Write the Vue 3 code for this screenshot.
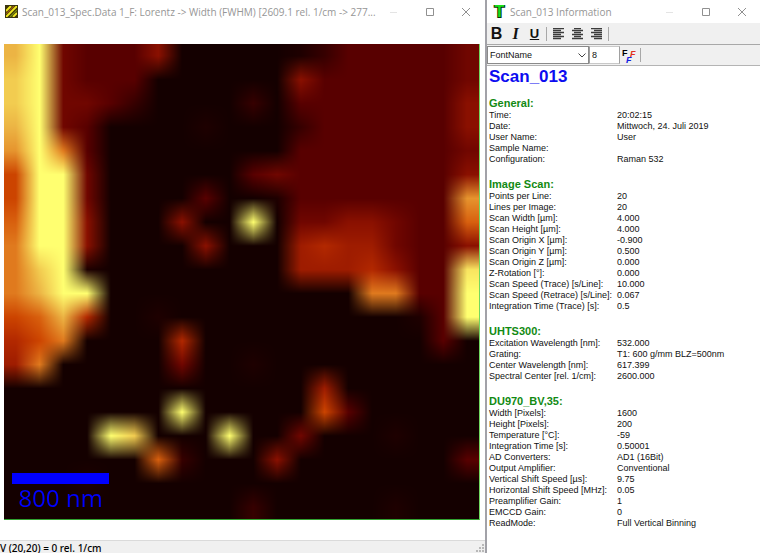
<script setup>
import { onMounted, ref } from 'vue'

// Colour scale, from lowest to highest value (one hex digit per step)
const palette = [
  [20, 0, 0], [30, 0, 0], [54, 0, 0], [88, 0, 0],
  [112, 6, 0], [138, 16, 0], [158, 28, 0], [178, 40, 0],
  [204, 68, 0], [216, 96, 14], [224, 122, 30], [230, 148, 46],
  [236, 180, 68], [242, 204, 80], [248, 228, 96], [255, 255, 112],
]

// 20 x 20 scan points
const scan = [
  'cf433350000012333334',
  'df433300000053333334',
  'df443200002033333335',
  'cf430000100023333335',
  'bfa30000000033333334',
  '8ff40000003433333335',
  '8ff4000030013333333b',
  '9ff5000500f044554339',
  'aff50000500067664335',
  'adf1000000006667533e',
  'acff00000000000aa33f',
  '89c7001000000000013f',
  '78a00007000000000030',
  '6a000004001000000000',
  '00000000000006000000',
  '0000000f000008300000',
  '0000fd000f0040001000',
  '00000092000500000003',
  '00010000000000000000',
  '00000000002000001000',
]

const canvas = ref(null)

function colorAt(col, row) {
  const r = Math.min(19, Math.max(0, row))
  const c = Math.min(19, Math.max(0, col))
  return palette[parseInt(scan[r][c], 16)]
}

onMounted(() => {
  const el = canvas.value
  const ctx = el.getContext('2d')
  const size = el.width
  const img = ctx.createImageData(size, size)
  const cell = size / 20
  for (let y = 0; y < size; y++) {
    const gy = (y + 0.5) / cell - 0.5
    const r0 = Math.floor(gy)
    const fy = gy - r0
    for (let x = 0; x < size; x++) {
      const gx = (x + 0.5) / cell - 0.5
      const c0 = Math.floor(gx)
      const fx = gx - c0
      const a = colorAt(c0, r0)
      const b = colorAt(c0 + 1, r0)
      const c = colorAt(c0, r0 + 1)
      const d = colorAt(c0 + 1, r0 + 1)
      const i = (y * size + x) * 4
      for (let k = 0; k < 3; k++) {
        const top = a[k] + (b[k] - a[k]) * fx
        const bottom = c[k] + (d[k] - c[k]) * fx
        img.data[i + k] = top + (bottom - top) * fy
      }
      img.data[i + 3] = 255
    }
  }
  ctx.putImageData(img, 0, 0)
})

const sections = [
  {
    title: 'General:',
    rows: [
      ['Time:', '20:02:15'],
      ['Date:', 'Mittwoch, 24. Juli 2019'],
      ['User Name:', 'User'],
      ['Sample Name:', ''],
      ['Configuration:', 'Raman 532'],
    ],
  },
  {
    title: 'Image Scan:',
    rows: [
      ['Points per Line:', '20'],
      ['Lines per Image:', '20'],
      ['Scan Width [µm]:', '4.000'],
      ['Scan Height [µm]:', '4.000'],
      ['Scan Origin X [µm]:', '-0.900'],
      ['Scan Origin Y [µm]:', '0.500'],
      ['Scan Origin Z [µm]:', '0.000'],
      ['Z-Rotation [°]:', '0.000'],
      ['Scan Speed (Trace) [s/Line]:', '10.000'],
      ['Scan Speed (Retrace) [s/Line]:', '0.067'],
      ['Integration Time (Trace) [s]:', '0.5'],
    ],
  },
  {
    title: 'UHTS300:',
    rows: [
      ['Excitation Wavelength [nm]:', '532.000'],
      ['Grating:', 'T1: 600 g/mm BLZ=500nm'],
      ['Center Wavelength [nm]:', '617.399'],
      ['Spectral Center [rel. 1/cm]:', '2600.000'],
    ],
  },
  {
    title: 'DU970_BV,35:',
    rows: [
      ['Width [Pixels]:', '1600'],
      ['Height [Pixels]:', '200'],
      ['Temperature [°C]:', '-59'],
      ['Integration Time [s]:', '0.50001'],
      ['AD Converters:', 'AD1 (16Bit)'],
      ['Output Amplifier:', 'Conventional'],
      ['Vertical Shift Speed [µs]:', '9.75'],
      ['Horizontal Shift Speed [MHz]:', '0.05'],
      ['Preamplifier Gain:', '1'],
      ['EMCCD Gain:', '0'],
      ['ReadMode:', 'Full Vertical Binning'],
    ],
  },
]

const aligns = [
  { name: 'Align left', wide: 'M0 .5h11M0 4.5h11M0 8.5h11', narrow: 'M0 2.5h8M0 6.5h8M0 10.5h8' },
  { name: 'Align center', wide: 'M0 2.5h11M0 6.5h11M0 10.5h11', narrow: 'M2 .5h7M2 4.5h7M2 8.5h7' },
  { name: 'Align right', wide: 'M0 .5h11M0 4.5h11M0 8.5h11', narrow: 'M3 2.5h8M3 6.5h8M3 10.5h8' },
]

const controls = [
  { name: 'Minimize', d: 'M1 5.5h7', faint: true },
  { name: 'Maximize', d: 'M1.5 1.5h7v7h-7z' },
  { name: 'Close', d: 'M1 1l8 8M9 1l-8 8' },
]
</script>

<template>
  <main class="desktop">
    <section class="window map-window">
      <header class="titlebar">
        <svg class="app-icon" viewBox="0 0 13 13" aria-hidden="true">
          <rect width="13" height="13" fill="#3c3408" />
          <path d="M1 6L6 1M1 12L12 1M8 12l4-4" stroke="#f0e820" stroke-width="1.8" />
          <path d="M1 9L9 1" stroke="#9a5a10" stroke-width="1.3" />
          <path d="M5 12l7-7" stroke="#788a10" stroke-width="1.3" />
          <rect x=".5" y=".5" width="12" height="12" fill="none" stroke="#3a3410" />
        </svg>
        <h1 class="caption">Scan_013_Spec.Data 1_F: Lorentz -&gt; Width (FWHM) [2609.1 rel. 1/cm -&gt; 277...</h1>
        <button v-for="c in controls" :key="c.name" class="control" :aria-label="c.name">
          <svg viewBox="0 0 10 10" :class="{ faint: c.faint }"><path :d="c.d" /></svg>
        </button>
      </header>
      <div class="map-area">
        <div class="map">
          <canvas ref="canvas" width="475" height="475"></canvas>
          <div class="scale">
            <div class="scale-bar"></div>
            <span>800 nm</span>
          </div>
        </div>
      </div>
      <footer class="status">
        <span>V (20,20) = 0 rel. 1/cm</span>
        <svg class="grip" viewBox="0 0 12 12" aria-hidden="true">
          <path d="M9 3h2v2h-2zM6 6h2v2h-2zM9 6h2v2h-2zM3 9h2v2h-2zM6 9h2v2h-2zM9 9h2v2h-2z" />
        </svg>
      </footer>
    </section>

    <section class="window info-window">
      <header class="titlebar">
        <svg class="app-icon" viewBox="0 0 13 13" aria-hidden="true">
          <text x="6.500" y="12" text-anchor="middle" class="t-glyph">T</text>
        </svg>
        <h1 class="caption">Scan_013 Information</h1>
        <button v-for="c in controls" :key="c.name" class="control" :aria-label="c.name">
          <svg viewBox="0 0 10 10" :class="{ faint: c.faint }"><path :d="c.d" /></svg>
        </button>
      </header>
      <div class="toolbar format">
        <button class="tool bold">B</button>
        <button class="tool italic">I</button>
        <button class="tool underline">U</button>
        <i class="divider"></i>
        <button v-for="a in aligns" :key="a.name" class="tool" :aria-label="a.name">
          <svg class="align" viewBox="0 0 11 12"><path :d="a.wide" /><path :d="a.narrow" /></svg>
        </button>
        <i class="divider"></i>
      </div>
      <div class="toolbar fonts">
        <div class="combo">
          <select aria-label="Font name"><option>FontName</option></select>
          <svg viewBox="0 0 8 5" aria-hidden="true"><path d="M.5.5L4 4 7.500.5" /></svg>
        </div>
        <input class="size" type="text" value="8" aria-label="Font size" />
        <button class="tool font-pick" aria-label="Choose font">
          <svg viewBox="0 0 15 15">
            <text x="0" y="8" fill="#000">F</text>
            <text x="8" y="9" fill="#e03020" font-style="italic">F</text>
            <text x="4" y="15" fill="#1020e0" font-style="italic">F</text>
          </svg>
        </button>
        <i class="divider"></i>
      </div>
      <article class="report">
        <h2>Scan_013</h2>
        <section v-for="s in sections" :key="s.title" class="group">
          <h3>{{ s.title }}</h3>
          <table>
            <tbody>
              <tr v-for="row in s.rows" :key="row[0]">
                <th scope="row">{{ row[0] }}</th>
                <td>{{ row[1] }}</td>
              </tr>
            </tbody>
          </table>
        </section>
      </article>
    </section>
  </main>
</template>

<style>
body {
  margin: 0;
  background: #fff;
}
</style>

<style scoped>
.desktop {
  display: grid;
  grid-template-columns: 485fr 275fr;
  min-height: 100vh;
  font-family: "Liberation Sans", Arial, sans-serif;
  color: #111;
}
.window {
  display: flex;
  flex-direction: column;
  min-width: 0;
  background: #fff;
}
h1, h2, h3 {
  margin: 0;
}
button {
  padding: 0;
  border: 0;
  background: none;
  color: inherit;
  font: inherit;
}
.titlebar {
  display: flex;
  align-items: center;
  gap: 4px;
  height: 23px;
  padding-left: 5px;
}
.map-window .titlebar {
  padding-right: 1px;
}
.info-window .titlebar {
  padding-left: 6px;
}
.app-icon {
  flex: none;
  width: 13px;
  height: 13px;
}
.t-glyph {
  font: bold 16px "Liberation Sans", sans-serif;
  fill: #18e018;
  stroke: #063006;
  stroke-width: 2px;
  paint-order: stroke;
}
.caption {
  flex: 1;
  width: 0;
  min-width: 0;
  white-space: nowrap;
  font: 400 10px/16px "Open Sans", "Noto Sans", sans-serif;
  color: #969696;
}
.control {
  display: flex;
  flex: none;
  justify-content: center;
  width: 36px;
  margin-left: -4px;
}
.control svg {
  width: 10px;
  height: 10px;
  fill: none;
  stroke: #909090;
}
.control .faint {
  stroke: #e4e4e4;
}
.map-area {
  flex: 1;
  padding: 21px 5px 20px 4px;
}
.map {
  position: relative;
  border-right: 1px solid #70d860;
  border-bottom: 1px solid #30a030;
}
canvas {
  display: block;
  width: 100%;
}
.scale {
  position: absolute;
  left: 8px;
  bottom: 8px;
  width: 97px;
  color: #00f;
  font: 24px/27px "Open Sans", "Noto Sans", sans-serif;
  text-align: center;
}
.scale-bar {
  height: 11px;
  background: #00f;
}
.scale span {
  display: block;
}
.status {
  display: flex;
  align-items: center;
  justify-content: space-between;
  height: 12px;
  border-top: 1px solid #dadada;
  background: #f0f0f0;
  font: 500 10px/14px "Noto Sans", sans-serif;
  color: #000;
  overflow: hidden;
}
.status span {
  padding-top: 2px;
}
.grip {
  width: 12px;
  height: 12px;
  fill: #b8b8b8;
}
.info-window {
  border-left: 2px solid #a2a2a8;
}
.toolbar {
  display: flex;
  align-items: center;
  background: #f0f0f0;
}
.format {
  height: 21px;
  border-bottom: 1px solid #a8a8a8;
}
.fonts {
  height: 20px;
  border-bottom: 1px solid #b4b4b4;
}
.tool {
  display: flex;
  align-items: center;
  justify-content: center;
  width: 18px;
  height: 18px;
  color: #111;
}
.bold {
  font: bold 16px "Liberation Sans", sans-serif;
}
.italic {
  font: italic bold 16px "Liberation Serif", serif;
}
.underline {
  font: bold 13px "Liberation Sans", sans-serif;
  text-decoration: underline;
}
.divider {
  width: 1px;
  height: 14px;
  margin: 0 2px;
  background: #a8a8a8;
}
.format .tool {
  width: 19px;
}
.align {
  width: 11px;
  height: 12px;
  fill: none;
  stroke: #3c3c3c;
  stroke-width: 1.4;
}
.combo {
  display: grid;
  align-items: center;
  width: 102px;
}
.combo > * {
  grid-area: 1 / 1;
}
select,
.size {
  box-sizing: border-box;
  height: 18px;
  margin: 0;
  padding: 0 2px;
  border: 1px solid #8a8a8a;
  border-radius: 0;
  background: #fff;
  color: #111;
  font: 9px "Liberation Sans", sans-serif;
  appearance: none;
}
select {
  width: 100%;
}
.combo svg {
  justify-self: end;
  width: 8px;
  height: 5px;
  margin-right: 3px;
  fill: none;
  stroke: #444;
  pointer-events: none;
}
.size {
  width: 31px;
  border-color: #c8c8c8 #a0a0a0;
}
.font-pick svg {
  width: 15px;
  height: 15px;
  font: bold 9px "Liberation Sans", sans-serif;
}
.report {
  padding: 1px 2px 2px;
}
h2 {
  margin-bottom: 10px;
  font-size: 17px;
  line-height: 20px;
  color: #0c0cf0;
}
h3 {
  font-size: 11px;
  line-height: 13px;
  color: #128a12;
}
.group {
  margin-bottom: 13px;
}
table {
  width: 100%;
  border-collapse: collapse;
  table-layout: fixed;
  font-size: 9px;
  line-height: 11px;
}
th,
td {
  height: 11px;
  padding: 0;
  text-align: left;
  font-weight: 400;
  white-space: nowrap;
}
th {
  width: 128px;
}
</style>
